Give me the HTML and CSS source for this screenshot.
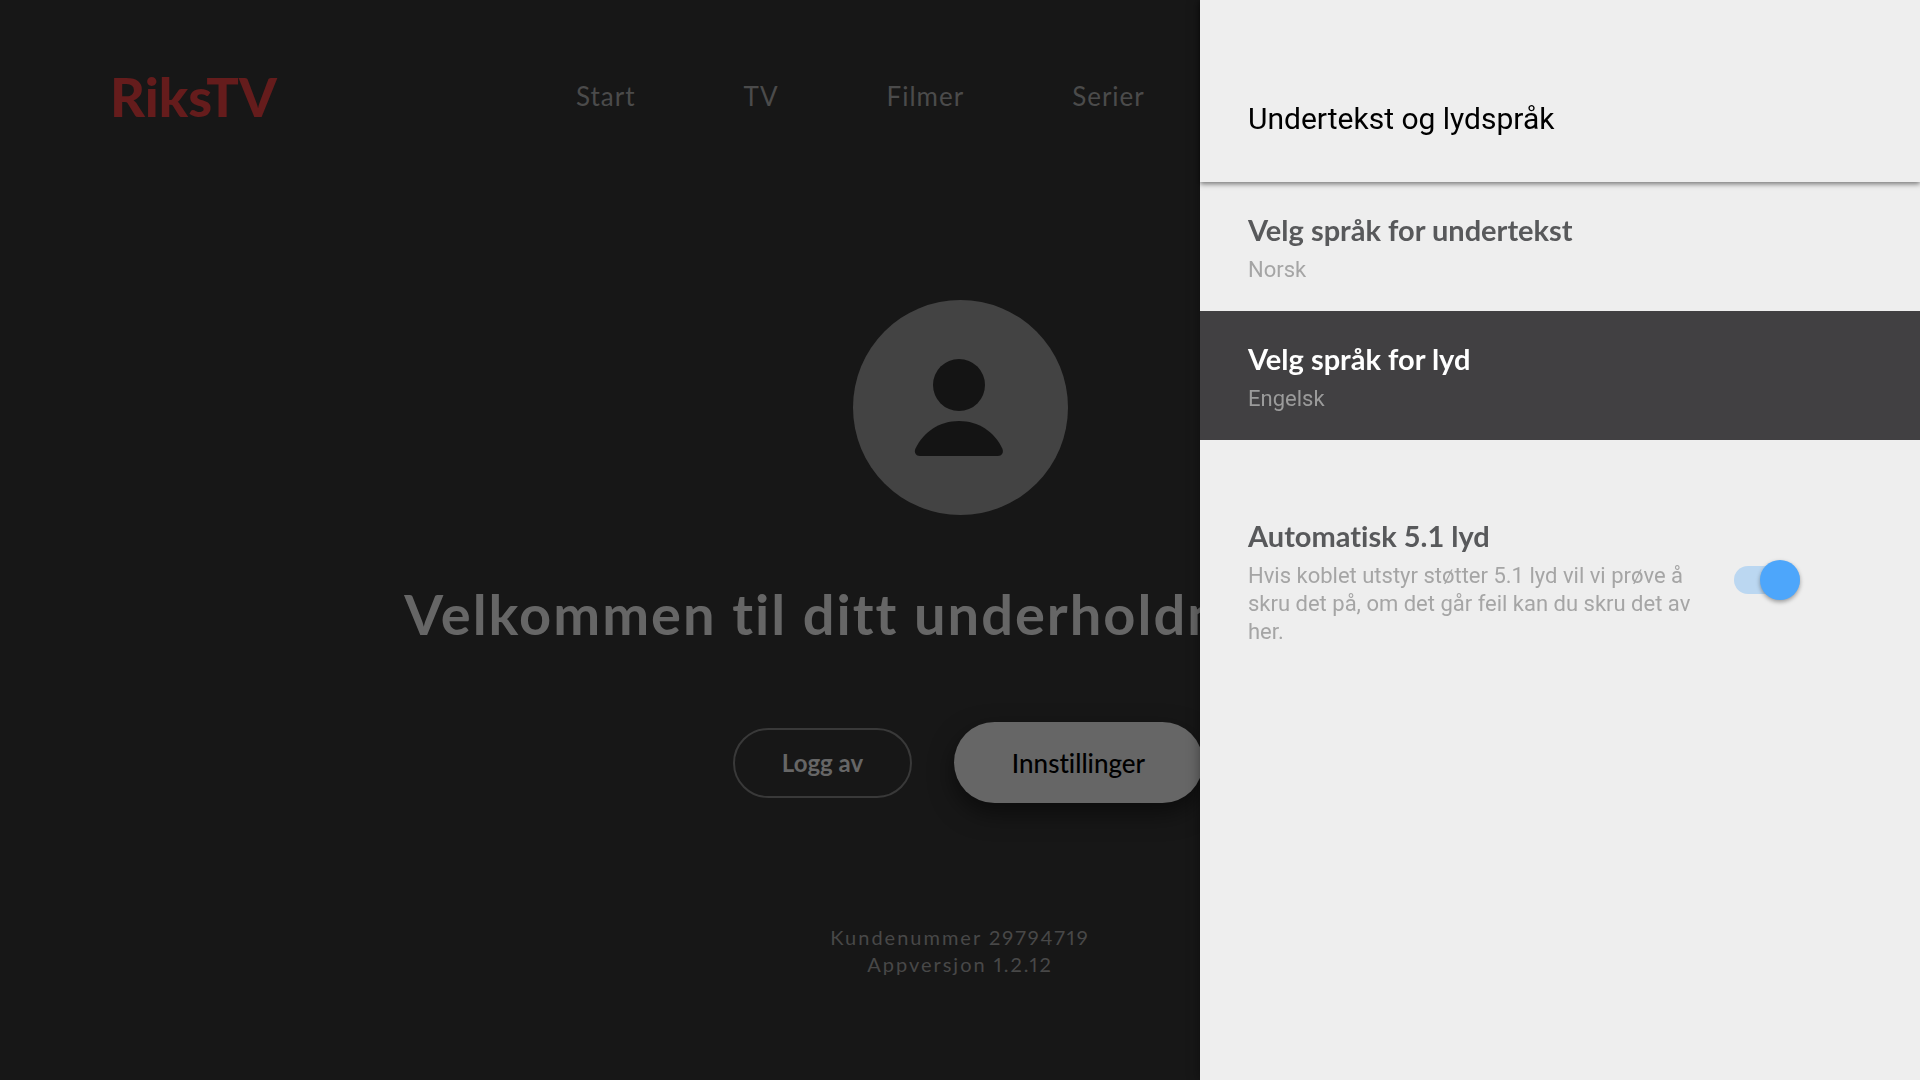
FILE: index.html
```html
<!DOCTYPE html>
<html lang="no">
<head>
  <meta charset="UTF-8">
  <meta name="viewport" content="width=device-width, initial-scale=1.0">
  <title>RiksTV - Innstillinger</title>
  <link rel="stylesheet" href="styles.css">
</head>
<body>
  <div class="screen">
    <header class="header">
      <a class="logo" href="#">RiksTV</a>
      <nav class="nav">
        <a href="#">Start</a>
        <a href="#">TV</a>
        <a href="#">Filmer</a>
        <a href="#">Serier</a>
      </nav>
    </header>

    <main class="profile">
      <svg class="avatar" viewBox="0 0 215 215" aria-hidden="true">
        <circle cx="107.5" cy="107.5" r="107.5" fill="#434343"/>
        <circle cx="106" cy="85" r="26" fill="#141414"/>
        <path d="M106 121c19.500 0 35.500 11 43.300 27.500 1.800 4-.6 7.500-4.500 7.500H67c-4 0-6.400-3.500-4.500-7.500C70.500 132 86.500 121 106 121z" fill="#141414"/>
      </svg>
      <h1 class="welcome">Velkommen til ditt underholdningssenter!</h1>
      <div class="buttons">
        <button class="btn">Logg av</button>
        <button class="btn btn-focused">Innstillinger</button>
      </div>
      <div class="info">
        <div>Kundenummer 29794719</div>
        <div>Appversjon 1.2.12</div>
      </div>
    </main>
  </div>

  <aside class="drawer">
    <h2 class="drawer-title">Undertekst og lydspråk</h2>
    <button class="item">
      <span class="item-title">Velg språk for undertekst</span>
      <span class="item-text">Norsk</span>
    </button>
    <button class="item item-focused">
      <span class="item-title">Velg språk for lyd</span>
      <span class="item-text">Engelsk</span>
    </button>
    <div class="item item-switch">
      <label class="item-label" for="auto-audio">
        <span class="item-title">Automatisk 5.1 lyd</span>
        <span class="item-text">Hvis koblet utstyr støtter 5.1 lyd vil vi prøve å skru det på, om det går feil kan du skru det av her.</span>
      </label>
      <input class="switch" type="checkbox" id="auto-audio" checked>
    </div>
  </aside>
</body>
</html>
```

FILE: styles.css
```css
* {
  box-sizing: border-box;
}
body {
  margin: 0;
  background-color: #171717;
  font-family: Lato, "Open Sans", sans-serif;
  font-variant-ligatures: none;
  overflow-x: hidden;
}
a {
  color: inherit;
  text-decoration: none;
}
button {
  font-family: inherit;
  font-variant-ligatures: none;
  cursor: pointer;
}
.screen {
  min-height: 100vh;
}
.header {
  display: grid;
  grid-template-columns: 30% 1fr;
  align-items: center;
  height: 192px;
}
.logo {
  padding-left: 110px;
  font-size: 54px;
  font-weight: 900;
  color: #651c1c;
}
.nav {
  display: flex;
  gap: 108px;
  font-size: 26px;
  letter-spacing: 1px;
  color: #4b4b4b;
}

/* profile */
.profile {
  display: flex;
  flex-direction: column;
  align-items: center;
  padding-top: 108px;
}
.avatar {
  width: 215px;
  height: 215px;
}
.welcome {
  margin: 63px 0 0;
  font-size: 56px;
  line-height: 72px;
  font-weight: 700;
  letter-spacing: 2px;
  white-space: nowrap;
  color: #666;
}
.buttons {
  display: flex;
  align-items: center;
  gap: 42px;
  margin-top: 72px;
}
.btn {
  width: 179px;
  height: 70px;
  border: 2px solid #393939;
  border-radius: 41px;
  background: none;
  font-size: 24px;
  font-weight: 700;
  color: #666;
}
.btn-focused {
  width: 249px;
  height: 81px;
  margin-right: -16px;
  border: none;
  background-color: #666;
  font-size: 26px;
  font-weight: 500;
  color: #000;
  box-shadow: 0 10px 24px rgba(0, 0, 0, 0.5);
}
.info {
  margin-top: 121px;
  font-size: 20px;
  line-height: 27px;
  letter-spacing: 2px;
  font-variant-numeric: proportional-nums;
  text-align: center;
  color: #484848;
}

/* drawer */
.drawer {
  position: fixed;
  top: 0;
  right: 0;
  bottom: 0;
  width: 37.5%;
  background-color: #eee;
  box-shadow: 0 0 12px rgba(0, 0, 0, 0.4);
}
.drawer-title {
  margin: 0;
  padding: 99px 48px 43px;
  font-family: Roboto, sans-serif;
  font-size: 30px;
  line-height: 40px;
  font-weight: 400;
  color: #000;
  box-shadow: 0 2px 5px rgba(0, 0, 0, 0.5);
}
.item {
  display: block;
  width: 100%;
  padding: 30px 48px 27px;
  border: none;
  background: none;
  text-align: left;
  color: #58595b;
}
.item-title {
  display: block;
  margin-bottom: 8px;
  font-size: 29px;
  line-height: 36px;
  font-weight: 700;
}
.item-text {
  display: block;
  font-family: Roboto, sans-serif;
  font-size: 22px;
  line-height: 28px;
  color: #a5a5a5;
}
.item-focused {
  background-color: #414042;
  color: #fff;
}
.item-focused .item-text {
  color: #9b9b9b;
}
.item-switch {
  display: flex;
  align-items: center;
  gap: 24px;
  margin-top: 48px;
  padding-right: 120px;
}
.item-label {
  flex: 1;
}
.switch {
  position: relative;
  appearance: none;
  width: 66px;
  height: 28px;
  margin: 0 0 4px;
  border-radius: 14px;
  background-color: #bbd7f1;
}
.switch::after {
  content: "";
  position: absolute;
  top: -6px;
  right: 0;
  width: 40px;
  height: 40px;
  border-radius: 50%;
  background-color: #4da6fb;
  box-shadow: 0 2px 4px rgba(0, 0, 0, 0.35);
}
```
